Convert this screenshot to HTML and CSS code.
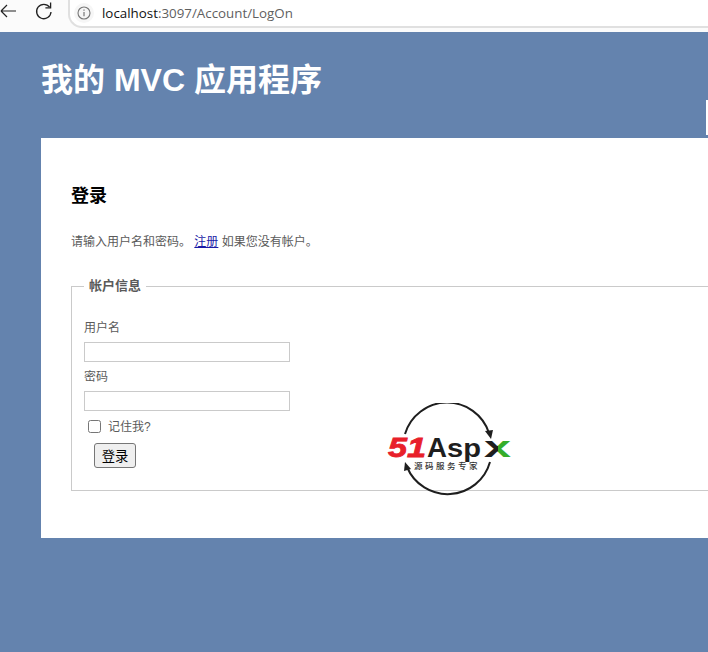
FILE: index.html
```html
<!DOCTYPE html>
<html lang="zh-CN">
<head>
<meta charset="utf-8">
<title>登录</title>
<link rel="stylesheet" href="styles.css">
</head>
<body>
<div class="toolbar">
  <svg class="tool-icon back" width="20" height="20" viewBox="0 0 20 20"><path d="M18 10H3M3 10l6-6M3 10l6 6" fill="none" stroke="#222" stroke-width="1.2"/></svg>
  <svg class="tool-icon reload" width="20" height="20" viewBox="0 0 20 20"><path d="M15.6 6.2A7.2 7.2 0 1 0 17 11" fill="none" stroke="#222" stroke-width="1.3"/><path d="M16.6 1.6v5.2h-5.2" fill="none" stroke="#222" stroke-width="1.3"/></svg>
  <div class="address">
    <span class="info-wrap"><svg width="14" height="14" viewBox="0 0 14 14"><circle cx="7" cy="7" r="6" fill="none" stroke="#777" stroke-width="1.1"/><path d="M7 6v4.2M7 3.6v1.2" stroke="#777" stroke-width="1.2"/></svg></span>
    <span class="url"><span class="host">localhost</span>:3097/Account/LogOn</span>
  </div>
</div>
<div class="page">
  <header class="header">
    <h1 class="title">我的 MVC 应用程序</h1>
    <div class="edge-mark"></div>
  </header>
  <main class="main">
    <h2 class="heading">登录</h2>
    <p class="intro">请输入用户名和密码。 <a class="link" href="#">注册</a> 如果您没有帐户。</p>
    <form>
      <fieldset class="box">
        <legend class="legend">帐户信息</legend>
        <div class="label first">用户名</div>
        <div class="field"><input class="input" type="text"></div>
        <div class="label">密码</div>
        <div class="field"><input class="input" type="password"></div>
        <div class="remember"><input class="check" type="checkbox"><span>记住我?</span></div>
        <div class="actions"><button class="submit" type="button">登录</button></div>
      </fieldset>
    </form>
    <svg class="logo" width="130" height="96" viewBox="0 0 130 96">
      <defs>
        <linearGradient id="xfill" gradientUnits="userSpaceOnUse" x1="98" y1="0" x2="126" y2="0">
          <stop offset="0.5" stop-color="#1e1e1e"/>
          <stop offset="0.5" stop-color="#35ad2b"/>
        </linearGradient>
      </defs>
      <path d="M19 31A44 44 0 0 1 103 30" fill="none" stroke="#1e1e1e" stroke-width="2"/>
      <path d="M99 28l8-1-2 9z" fill="#1e1e1e"/>
      <path d="M104 59A44 44 0 0 1 21 64" fill="none" stroke="#1e1e1e" stroke-width="2"/>
      <path d="M19 59l6 7-7 2z" fill="#1e1e1e"/>
      <text class="logo-51" x="2" y="54" textLength="38" lengthAdjust="spacingAndGlyphs">51</text>
      <text class="logo-a" x="41" y="54" textLength="20" lengthAdjust="spacingAndGlyphs">A</text>
      <text class="logo-sp" x="61" y="54" textLength="34" lengthAdjust="spacingAndGlyphs">sp</text>
      <text class="logo-x" x="98" y="54" textLength="27" lengthAdjust="spacingAndGlyphs" fill="url(#xfill)">x</text>
      <text class="logo-sub" x="28" y="66">源码服务专家</text>
    </svg>
  </main>
</div>
</body>
</html>
```
FILE: styles.css
```css
html, body {
  margin: 0;
  padding: 0;
  height: 652px;
  overflow: hidden;
}
body {
  width: 708px;
  background: #6483ae;
  font-family: "Liberation Sans", "Noto Sans CJK SC", sans-serif;
  font-size: 12px;
  color: #5a5a5a;
}
.toolbar {
  height: 32px;
  box-sizing: border-box;
  background: #fbfbfb;
  display: flex;
  align-items: flex-start;
  overflow: hidden;
}
.tool-icon { flex: none; margin-top: 1px; }
.back { margin-left: -2px; }
.reload { margin-left: 16px; }
.address {
  margin-left: 14px;
  flex: 1;
  height: 27px;
  margin-top: -1px;
  background: #fff;
  border: 2px solid #e0e0e0;
  border-right: 0;
  border-top: 0;
  border-radius: 0 0 0 14px;
  display: flex;
  align-items: center;
}
.info-wrap {
  display: flex;
  align-items: center;
  justify-content: center;
  width: 20px;
  height: 20px;
  margin-left: 4px;
  border-radius: 50%;
  background: #f6f6f6;
}
.url {
  margin-left: 8px;
  font-family: "Open Sans", sans-serif;
  font-size: 13.35px;
  color: #5f5f5f;
}
.host { color: #111; }
.header {
  position: relative;
  height: 106px;
  box-sizing: border-box;
  padding: 29px 0 0 41px;
}
.title {
  margin: 0;
  font-size: 32px;
  line-height: 38px;
  font-weight: bold;
  color: #fff;
  white-space: nowrap;
}
.edge-mark {
  position: absolute;
  right: 0;
  top: 68px;
  width: 2px;
  height: 35px;
  background: #fff;
}
.main {
  position: relative;
  margin-left: 41px;
  width: 900px;
  height: 400px;
  box-sizing: border-box;
  background: #fff;
  padding: 47px 0 0 30px;
}
.heading {
  margin: 0;
  font-size: 18px;
  line-height: 22px;
  font-weight: bold;
  color: #000;
}
.intro {
  margin: 26px 0 0;
  line-height: 18px;
}
.link { color: #1a1aa6; }
.box {
  margin: 26px 0 0;
  padding: 0 12px;
  height: 214px;
  box-sizing: border-box;
  border: 1px solid #cacaca;
  border-radius: 0;
  min-width: 0;
}
.legend {
  margin-left: 0;
  padding: 0 5px;
  font-size: 13px;
  line-height: 18px;
  font-weight: bold;
  color: #5a5a5a;
}
.label { line-height: 18px; margin-top: 6px; }
.label.first { margin-top: 24px; }
.field { margin-top: 5px; }
.input {
  display: block;
  margin: 0;
  width: 206px;
  height: 20px;
  box-sizing: border-box;
  border: 1px solid #cacaca;
  padding: 1px 4px;
}
.remember {
  display: flex;
  align-items: center;
  margin-top: 7px;
  height: 18px;
  line-height: 18px;
}
.check {
  margin: 0 7px 2px 4px;
  width: 13px;
  height: 13px;
}
.actions { margin-top: 7px; padding-left: 10px; }
.submit {
  display: block;
  width: 42px;
  height: 25px;
  padding: 0;
  box-sizing: border-box;
  background: #efefef;
  border: 1px solid #767676;
  border-radius: 3px;
  font-family: "Noto Sans CJK SC", sans-serif;
  font-size: 13.3px;
  color: #000;
}
.logo {
  position: absolute;
  left: 345px;
  top: 265px;
}
.logo-51 { font: italic 700 28px "Liberation Sans", sans-serif; fill: #e8202a; stroke: #e8202a; stroke-width: 0.8px; }
.logo-a { font: 700 28px "Liberation Sans", sans-serif; fill: #1e1e1e; }
.logo-sp { font: 700 26px "Liberation Sans", sans-serif; fill: #1e1e1e; }
.logo-x { font: 700 29px "Liberation Sans", sans-serif; }
.logo-sub { font: 500 8.5px "Noto Sans CJK SC", sans-serif; fill: #333; letter-spacing: 2.5px; }
```
